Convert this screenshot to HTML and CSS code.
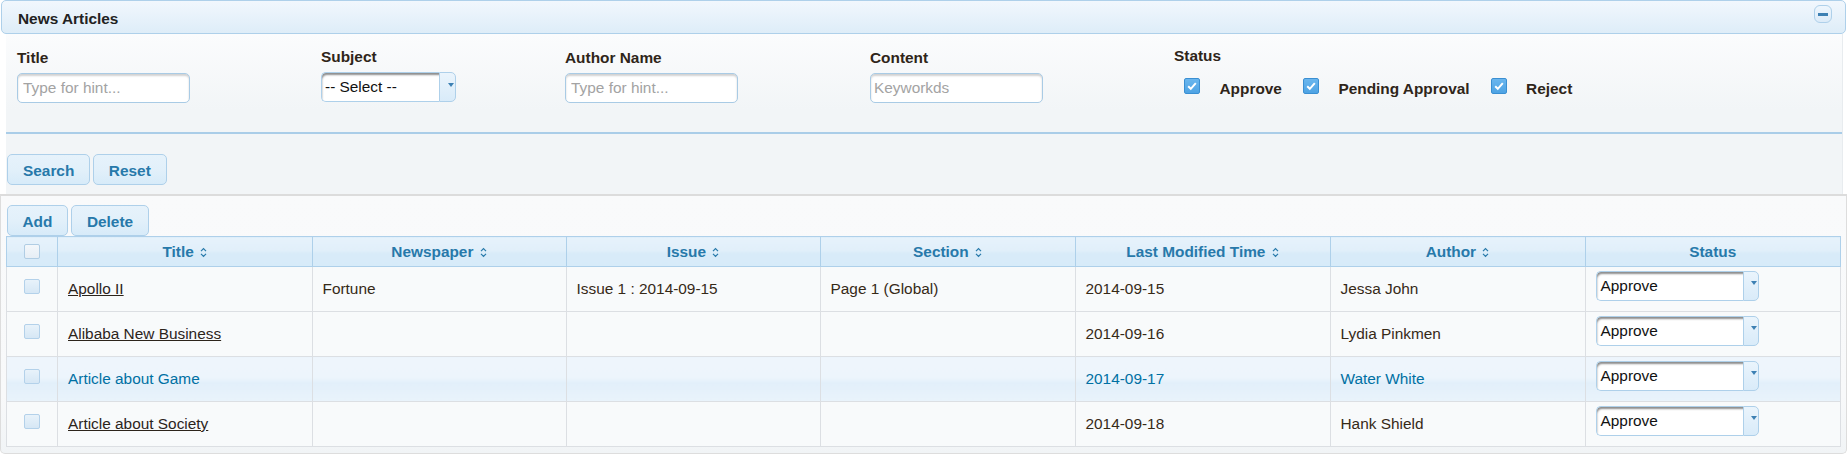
FILE: index.html
```html
<!DOCTYPE html>
<html>
<head>
<meta charset="utf-8">
<title>News Articles</title>
<link rel="stylesheet" href="styles.css">
</head>
<body>
<div class="panel">
  <div class="panel-header">
    <span class="panel-title">News Articles</span>
    <span class="collapse"><span class="minus"></span></span>
  </div>
  <div class="panel-body">
    <div class="filters">
      <div class="field f-title">
        <label class="lbl">Title</label>
        <input class="txt" type="text" placeholder="Type for hint...">
      </div>
      <div class="field f-subject">
        <label class="lbl">Subject</label>
        <span class="combo combo-sm"><span class="combo-text">-- Select --</span><span class="combo-btn"><span class="tri"></span></span></span>
      </div>
      <div class="field f-author">
        <label class="lbl">Author Name</label>
        <input class="txt" type="text" placeholder="Type for hint...">
      </div>
      <div class="field f-content">
        <label class="lbl">Content</label>
        <input class="txt txt-kw" type="text" placeholder="Keyworkds">
      </div>
      <div class="field f-status">
        <label class="lbl">Status</label>
        <div class="checks">
          <span class="cb cb-on"><svg viewBox="0 0 16 16" width="16" height="16"><path d="M4.2 8.3 L6.8 10.8 L11.8 5.2" fill="none" stroke="#fff" stroke-width="2"/></svg></span><span class="cb-label">Approve</span>
          <span class="cb cb-on"><svg viewBox="0 0 16 16" width="16" height="16"><path d="M4.2 8.3 L6.8 10.8 L11.8 5.2" fill="none" stroke="#fff" stroke-width="2"/></svg></span><span class="cb-label">Pending Approval</span>
          <span class="cb cb-on"><svg viewBox="0 0 16 16" width="16" height="16"><path d="M4.2 8.3 L6.8 10.8 L11.8 5.2" fill="none" stroke="#fff" stroke-width="2"/></svg></span><span class="cb-label">Reject</span>
        </div>
      </div>
    </div>
    <div class="sep"></div>
    <div class="actions">
      <button class="btn">Search</button><button class="btn">Reset</button>
    </div>
  </div>
  <div class="grid-panel">
    <div class="actions">
      <button class="btn">Add</button><button class="btn">Delete</button>
    </div>
    <table class="grid">
      <colgroup>
        <col class="c-check"><col class="c-a"><col class="c-b"><col class="c-b"><col class="c-c"><col class="c-c"><col class="c-c"><col>
      </colgroup>
      <thead>
        <tr>
          <th><span class="cb cb-off cb-head"></span></th>
          <th>Title <svg class="sort" viewBox="0 0 7 11" width="7" height="11"><path d="M1 4.2 L3.5 1.6 L6 4.2 M1 6.8 L3.5 9.4 L6 6.8" fill="none" stroke="#2779aa" stroke-width="1.2"/></svg></th>
          <th>Newspaper <svg class="sort" viewBox="0 0 7 11" width="7" height="11"><path d="M1 4.2 L3.5 1.6 L6 4.2 M1 6.8 L3.5 9.4 L6 6.8" fill="none" stroke="#2779aa" stroke-width="1.2"/></svg></th>
          <th>Issue <svg class="sort" viewBox="0 0 7 11" width="7" height="11"><path d="M1 4.2 L3.5 1.6 L6 4.2 M1 6.8 L3.5 9.4 L6 6.8" fill="none" stroke="#2779aa" stroke-width="1.2"/></svg></th>
          <th>Section <svg class="sort" viewBox="0 0 7 11" width="7" height="11"><path d="M1 4.2 L3.5 1.6 L6 4.2 M1 6.8 L3.5 9.4 L6 6.8" fill="none" stroke="#2779aa" stroke-width="1.2"/></svg></th>
          <th>Last Modified Time <svg class="sort" viewBox="0 0 7 11" width="7" height="11"><path d="M1 4.2 L3.5 1.6 L6 4.2 M1 6.8 L3.5 9.4 L6 6.8" fill="none" stroke="#2779aa" stroke-width="1.2"/></svg></th>
          <th>Author <svg class="sort" viewBox="0 0 7 11" width="7" height="11"><path d="M1 4.2 L3.5 1.6 L6 4.2 M1 6.8 L3.5 9.4 L6 6.8" fill="none" stroke="#2779aa" stroke-width="1.2"/></svg></th>
          <th>Status</th>
        </tr>
      </thead>
      <tbody>
        <tr>
          <td class="td-check"><span class="cb cb-off"></span></td>
          <td><a class="link" href="#">Apollo II</a></td>
          <td>Fortune</td>
          <td>Issue 1 : 2014-09-15</td>
          <td>Page 1 (Global)</td>
          <td>2014-09-15</td>
          <td>Jessa John</td>
          <td class="td-status"><span class="combo combo-lg"><span class="combo-text">Approve</span><span class="combo-btn"><span class="tri"></span></span></span></td>
        </tr>
        <tr>
          <td class="td-check"><span class="cb cb-off"></span></td>
          <td><a class="link" href="#">Alibaba New Business</a></td>
          <td></td>
          <td></td>
          <td></td>
          <td>2014-09-16</td>
          <td>Lydia Pinkmen</td>
          <td class="td-status"><span class="combo combo-lg"><span class="combo-text">Approve</span><span class="combo-btn"><span class="tri"></span></span></span></td>
        </tr>
        <tr class="hover">
          <td class="td-check"><span class="cb cb-off"></span></td>
          <td><a class="link" href="#">Article about Game</a></td>
          <td></td>
          <td></td>
          <td></td>
          <td>2014-09-17</td>
          <td>Water White</td>
          <td class="td-status"><span class="combo combo-lg"><span class="combo-text">Approve</span><span class="combo-btn"><span class="tri"></span></span></span></td>
        </tr>
        <tr>
          <td class="td-check"><span class="cb cb-off"></span></td>
          <td><a class="link" href="#">Article about Society</a></td>
          <td></td>
          <td></td>
          <td></td>
          <td>2014-09-18</td>
          <td>Hank Shield</td>
          <td class="td-status"><span class="combo combo-lg"><span class="combo-text">Approve</span><span class="combo-btn"><span class="tri"></span></span></span></td>
        </tr>
      </tbody>
    </table>
  </div>
</div>
</body>
</html>
```

FILE: styles.css
```css
* { box-sizing: border-box; }

html, body {
  margin: 0;
  padding: 0;
  background: #ffffff;
}

body {
  font-family: "Liberation Sans", Arial, sans-serif;
  font-size: 15.4px;
  color: #362917;
}

.panel {
  width: 1847px;
}

/* ---------- header ---------- */
.panel-header {
  margin: 0 1px;
  height: 34px;
  border: 1px solid #aed0ea;
  border-radius: 5px;
  background: linear-gradient(#f1f7fd, #deedf8);
  display: flex;
  justify-content: space-between;
  align-items: flex-start;
  padding: 4px 13px 0 16px;
}

.panel-title {
  font-size: 15.4px;
  font-weight: bold;
  line-height: 28px;
  color: #222222;
}

.collapse {
  width: 18px;
  height: 18px;
  border: 1px solid #aed0ea;
  border-radius: 6px;
  background: linear-gradient(#eef6fd, #dcebf8);
  display: flex;
  align-items: center;
  justify-content: center;
}

.minus {
  width: 10px;
  height: 3px;
  background: #3d80b3;
}

/* ---------- filter form ---------- */
.panel-body {
  margin: 0 4px 0 6px;
  padding-bottom: 9px;
  background: linear-gradient(#fbfcfd 0px, #f2f5f7 75px, #f2f5f7 100%);
  border-right: 1px solid #e8ecef;
}

.filters {
  display: grid;
  grid-template-columns: 304px 244px 305px 304px auto;
  padding: 12px 0 0 11px;
  align-items: start;
}

.field { display: flex; flex-direction: column; align-items: flex-start; }
.f-title, .f-author, .f-content { padding-top: 3px; }
.f-subject { padding-top: 1.5px; }
.f-status { padding-top: 0.5px; }

.lbl {
  display: block;
  font-size: 15.4px;
  font-weight: bold;
  line-height: 18px;
  margin-bottom: 6px;
  color: #2f2519;
}

.txt {
  width: 173px;
  height: 30px;
  border: 1px solid #a9cbe5;
  border-radius: 5px;
  background: #ffffff;
  box-shadow: inset 0 2px 2px rgba(0, 0, 0, 0.18);
  padding: 0 0 0 5px;
  font-family: "Liberation Sans", Arial, sans-serif;
  font-size: 15.4px;
  color: #333;
  outline: none;
}
.txt-kw { padding-left: 3px; }
.txt::placeholder { color: #a3a3a3; }

/* combo (select) */
.combo {
  display: inline-flex;
  height: 30px;
}
.combo-sm { width: 135px; }
.combo-lg { width: 163px; }

.combo-text {
  flex: 1;
  border: 1px solid #aed0ea;
  border-right: none;
  border-radius: 5px 0 0 5px;
  background: #ffffff;
  box-shadow: inset 1px 3px 2px -1px rgba(0, 0, 0, 0.45);
  padding: 0 0 0 3px;
  font-size: 15.4px;
  line-height: 28px;
  color: #111;
}
.combo-lg .combo-text { padding-left: 4px; line-height: 27px; }

.combo-btn {
  width: 17px;
  border: 1px solid #aed0ea;
  border-radius: 0 5px 5px 0;
  background: linear-gradient(#eaf4fc, #d9ebf9);
  display: flex;
  justify-content: flex-end;
  align-items: flex-start;
  padding: 10px 1px 0 0;
}
.combo-lg .combo-btn { width: 16px; padding-top: 9px; }

.tri {
  width: 0;
  height: 0;
  border-left: 3.5px solid transparent;
  border-right: 3.5px solid transparent;
  border-top: 4px solid #3d80b3;
}

/* checkboxes */
.checks {
  display: flex;
  align-items: flex-start;
  margin-top: 7.5px;
  padding-left: 10px;
}

.cb {
  display: inline-block;
  width: 16px;
  height: 16px;
  border-radius: 2px;
}

.cb-on {
  background: linear-gradient(#6ab6ee, #4ea3e4);
  border: 1px solid #3a8fd2;
}
.cb-on svg { display: block; margin: -1px; }

.cb-label {
  font-size: 15.4px;
  font-weight: bold;
  line-height: 18px;
  margin: 2px 21px 0 19.5px;
  color: #2f2519;
}

.cb-off {
  width: 16px;
  height: 15px;
  border: 1px solid #b3d1ea;
  background: linear-gradient(#e8f2fa, #d6e7f5);
  vertical-align: baseline;
  margin-bottom: 1px;
}

.cb-head {
  background: linear-gradient(#f3f7fb, #e6eef5);
  border-color: #b0cde4;
  vertical-align: -2px;
  margin-bottom: 0;
}

/* separator line */
.sep {
  height: 2px;
  background: #aacde8;
  margin-top: 29px;
}

/* buttons */
.actions {
  display: flex;
  gap: 2.5px;
  padding-left: 1px;
}
.panel-body .actions { margin-top: 20px; }

.btn {
  height: 31px;
  border: 1px solid #aed0ea;
  border-radius: 5px;
  background: linear-gradient(#e6f2fb 0%, #e2f0fa 50%, #d7ebf9 100%);
  padding: 3px 15px 0 15px;
  font-family: "Liberation Sans", Arial, sans-serif;
  font-size: 15.4px;
  font-weight: bold;
  line-height: 26px;
  color: #2779aa;
  cursor: pointer;
}

/* ---------- grid panel ---------- */
.grid-panel {
  border: 1px solid #dddddd;
  border-top: 2px solid #dcdcdc;
  border-radius: 0 0 5px 5px;
  background: linear-gradient(#f9fafb 0px, #f8f9fa 200px, #f1f4f6 100%);
  padding: 9px 4px 6px 5px;
}

.grid-panel .actions { padding-left: 0.5px; }

.grid {
  width: 1835px;
  border-collapse: collapse;
  table-layout: fixed;
  border: 1px solid #aed0ea;
}

.c-check { width: 51px; }
.c-a { width: 254.5px; }
.c-b { width: 254px; }
.c-c { width: 255px; }

.grid th {
  height: 30px;
  padding: 0;
  border: 1px solid #aed0ea;
  background: linear-gradient(#e6f2fb 0%, #e1effa 45%, #d8ebf9 55%, #d7ebf9 100%);
  font-size: 15.4px;
  font-weight: bold;
  line-height: 29px;
  color: #2779aa;
  text-align: center;
  white-space: nowrap;
}

.sort { vertical-align: -1px; margin-left: 2px; }

.grid td {
  height: 45px;
  padding: 0 10px;
  border: 1px solid #dcdfe3;
  background: #f8fafb;
  font-size: 15.4px;
  line-height: 20px;
  color: #362917;
  white-space: nowrap;
}

.grid td.td-check { text-align: center; padding: 0; }

.grid td.td-status {
  vertical-align: top;
  padding-top: 4px;
}

.link { color: #2c241b; text-decoration: underline; }

.grid tr.hover td {
  background: linear-gradient(#eef5fc 0%, #edf5fc 45%, #e2effa 58%, #e9f3fb 100%);
  color: #0070a3;
}
.grid tr.hover .link { color: #0070a3; text-decoration: none; }
```
